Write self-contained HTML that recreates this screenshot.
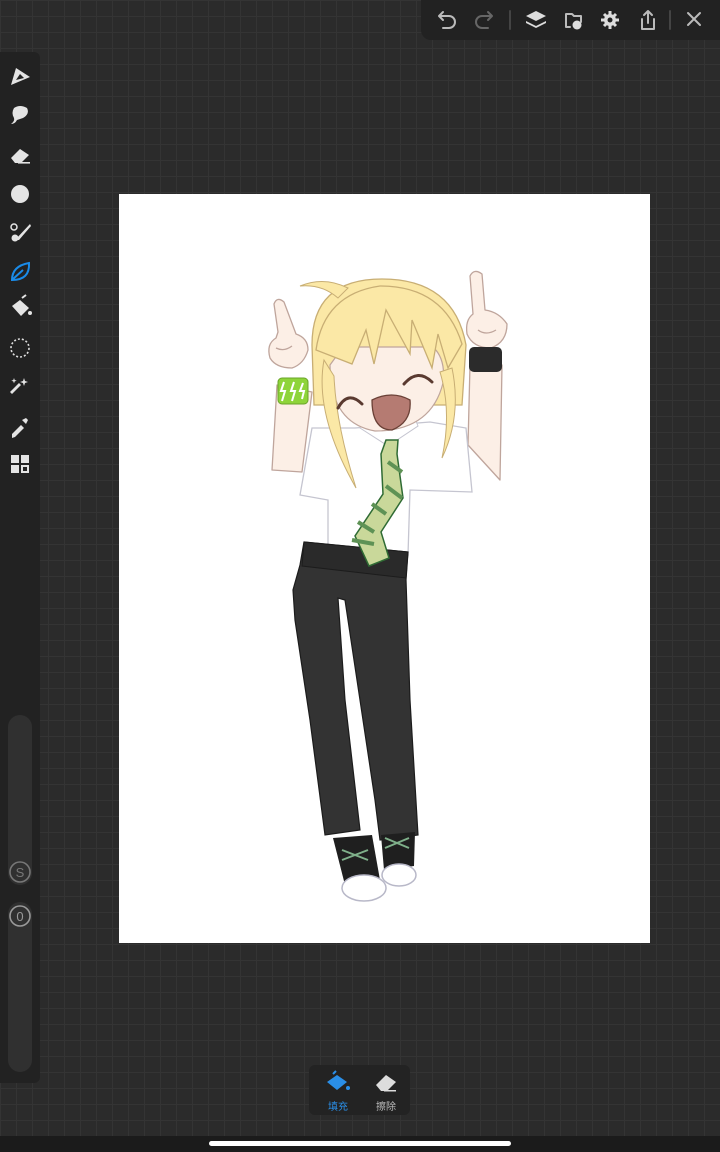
<!DOCTYPE html>
<html><head><meta charset="utf-8">
<style>
html,body{margin:0;padding:0;}
body{width:720px;height:1152px;position:relative;overflow:hidden;background-color:#2b2b2b;
background-image:linear-gradient(#343434 1px,transparent 1px),linear-gradient(90deg,#343434 1px,transparent 1px);
background-size:16px 16px;font-family:"Liberation Sans","Noto Sans CJK SC",sans-serif;}
.top{position:absolute;left:421px;top:0;width:299px;height:40px;background:#222;border-bottom-left-radius:10px;}
.left{position:absolute;left:0;top:52px;width:40px;height:1031px;background:#222;border-top-right-radius:6px;border-bottom-right-radius:6px;}
.slider{position:absolute;left:8px;width:24px;background:#303030;border-radius:12px;}
.canvas{position:absolute;left:119px;top:194px;width:531px;height:749px;background:#fff;}
.pill{position:absolute;left:309px;top:1065px;width:101px;height:50px;background:#232323;border-radius:6px;}
.pill span{position:absolute;top:33px;font-size:10px;}
.bottom{position:absolute;left:0;top:1136px;width:720px;height:16px;background:#1b1b1b;}
.home{position:absolute;left:209px;top:1141px;width:302px;height:5px;border-radius:3px;background:#fff;}
svg{position:absolute;left:0;top:0;}
</style></head><body>
<div class="top"></div>
<div class="left">
 <div class="slider" style="top:663px;height:170px;"></div>
 <div class="slider" style="top:850px;height:170px;"></div>
</div>
<div class="canvas"></div>
<div class="pill"><span style="left:19px;color:#2a8fe8">填充</span><span style="left:67px;color:#bbb">擦除</span></div>
<div class="bottom"></div><div class="home"></div>

<svg width="720" height="1152" viewBox="0 0 720 1152">
<g fill="none" stroke="#bbb" stroke-width="2" stroke-linecap="round" stroke-linejoin="round">
 <path d="M440 16 h9 a6 6 0 0 1 0 12 h-6 M443 12 l-4 4 4 4"/>
 <path d="M491 16 h-9 a6 6 0 0 0 0 12 h6 M488 12 l4 4 -4 4" stroke="#666"/>
 <line x1="510" y1="11" x2="510" y2="29" stroke="#444"/>
 <line x1="670" y1="11" x2="670" y2="29" stroke="#444"/>
 <path d="M688 13 l12 12 M700 13 l-12 12"/>
 <path d="M642 19 v10 h12 v-10 M648 23 v-12 M644 15 l4 -4 4 4"/>
 <path d="M566 14 h6 l2 2 h7 v6 M566 14 v13 h4"/>
</g>
<g fill="#ddd">
 <path d="M536 11 l10 5 -10 5 -10 -5z"/>
 <path d="M526 21 l10 5 10 -5 0 2 -10 5 -10 -5z"/>
 <circle cx="577" cy="25" r="4.5"/>
 <circle cx="610" cy="20" r="6"/>
 <g stroke="#ddd" stroke-width="3"><path d="M610 11 v18 M601 20 h18 M604 14 l12 12 M616 14 l-12 12"/></g>
 <circle cx="610" cy="20" r="2.5" fill="#222"/>
</g>
<g fill="#e4e4e4">
 <path d="M11 85 L16 68 L30 77 Z"/><path d="M16 80 l4-6 4 4z" fill="#222"/>
 <path d="M14 108 q6-4 13 0 q3 6-4 10 l-6 2 q-2 4-6 4 q4-3 3-6 q-3-5 0-10z"/>
 <path d="M11 158 l9-9 9 6 -8 8 h-6z"/><rect x="18" y="162" width="12" height="1.6"/>
 <circle cx="20" cy="194" r="9"/>
 <path d="M15 240 l15-16 1 2 -12 14z"/><circle cx="15" cy="238" r="3.5"/>
 <circle cx="14" cy="227" r="3" fill="none" stroke="#e4e4e4" stroke-width="1.5"/>
 <path d="M12 306 l8-6 9 8 -8 8z"/><path d="M22 298 l4 -3" stroke="#e4e4e4" stroke-width="2"/><circle cx="30" cy="313" r="2"/>
 <path d="M19 383 l2 2 -9 9 -2 -2z"/><path d="M24 378 l1 3 3 1 -3 1 -1 3 -1 -3 -3 -1 3 -1z"/><path d="M14 378 l0.7 2 2 .7 -2 .7 -.7 2 -.7 -2 -2 -.7 2 -.7z"/>
 <path d="M12 434 l9-9 3 3 -9 9 -3 1z"/><path d="M22 420 l4-2 2 2 -2 4z"/>
 <rect x="11" y="455" width="8" height="8"/><rect x="21" y="455" width="8" height="8"/><rect x="11" y="465" width="8" height="8"/><rect x="21" y="465" width="8" height="8"/><rect x="23" y="467" width="4" height="4" fill="#222"/>
</g>
<circle cx="20" cy="348" r="9" fill="none" stroke="#ddd" stroke-width="1.6" stroke-dasharray="2 2"/>
<path d="M12 280 q0-14 17-17 q1 17-17 17z M13 279 l10-9" fill="none" stroke="#1a8be8" stroke-width="2"/>
<g fill="none" stroke="#777" stroke-width="1.6"><circle cx="20" cy="872" r="10"/><circle cx="20" cy="916" r="10" stroke="#999"/></g>
<text x="20" y="877" font-size="13" fill="#777" text-anchor="middle" font-family="Liberation Sans">S</text>
<text x="20" y="921" font-size="13" fill="#999" text-anchor="middle" font-family="Liberation Sans">0</text>
<path d="M327 1082 l10-7 10 7 -10 8z" fill="#2a8fe8"/><path d="M333 1074 l3-3" stroke="#2a8fe8" stroke-width="2"/><circle cx="348" cy="1088" r="2" fill="#2a8fe8"/>
<path d="M376 1085 l10-10 10 7 -9 9 h-6z" fill="#ddd"/><rect x="384" y="1090" width="12" height="1.5" fill="#ddd"/>

<!-- character -->
<g stroke="#bfa59c" stroke-width="1.3" stroke-linejoin="round">
 <path d="M277 385 L272 470 L302 472 L312 392 Z" fill="#fcefe6"/>
 <path d="M470 365 L468 445 L500 480 L502 365 Z" fill="#fcefe6"/>
 <path d="M274 304 q3-8 10-2 l12 32 q12 4 12 16 q-4 14-16 18 q-16 0-22-10 q-4-14 6-20 l2-6 z" fill="#fcefe6"/>
 <path d="M470 276 q4-8 12-2 l3 36 q14 2 22 14 q0 18-16 24 q-18 0-24-14 q-2-14 6-20z" fill="#fcefe6"/>
 <path d="M276 348 q8 4 16-2 M478 330 q8 6 18 0" fill="none"/>
</g>
<rect x="278" y="378" width="30" height="26" rx="4" fill="#8ed43a" stroke="#6aa428"/>
<path d="M284 382 l-3 9 h4 l-3 10 M294 382 l-3 9 h4 l-3 10 M303 383 l-3 8 h4 l-2 8" stroke="#fff" stroke-width="2" fill="none"/>
<rect x="469" y="347" width="33" height="25" rx="5" fill="#2b2b2b"/>
<path d="M312 428 L300 495 L328 500 L328 548 L408 555 L410 490 L472 492 L466 428 L430 422 L355 428 Z" fill="#fff" stroke="#c5c5d0" stroke-width="1.3"/>
<path d="M360 428 l28 18 l30 -20 l-4 -10 l-26 14 l-24 -12z" fill="#fff" stroke="#c5c5d0"/>
<path d="M304 542 L408 552 L406 580 L410 700 L418 835 L380 840 L375 800 L345 600 L338 598 L345 700 L360 830 L325 835 L310 720 L295 620 L293 590 L300 565 Z" fill="#333" stroke="#1c1c1c" stroke-width="1.2"/>
<path d="M304 542 L408 552 L406 578 L302 566 Z" fill="#2a2a2a" stroke="#1c1c1c"/>
<path d="M333 838 L372 835 L380 880 L345 885 Z" fill="#1f1f1f"/>
<path d="M381 835 L415 832 L414 866 L384 870 Z" fill="#1f1f1f"/>
<ellipse cx="364" cy="888" rx="22" ry="13" fill="#fff" stroke="#b8b8c8" stroke-width="1.5"/>
<ellipse cx="399" cy="875" rx="17" ry="11" fill="#fff" stroke="#b8b8c8" stroke-width="1.5"/>
<path d="M342 850 l26 10 M342 860 l26-10 M385 838 l24 10 M385 848 l24-10" stroke="#7fb08a" stroke-width="2" fill="none"/>
<!-- tie -->
<path d="M386 440 l12 0 l-1 14 l6 44 l-22 34 l8 26 l-20 8 l-14 -30 l28 -42 l-2 -40z" fill="#c9d89a" stroke="#2f6b34" stroke-width="1.5"/>
<path d="M388 462 l14 10 M386 486 l16 12 M372 504 l14 10 M358 522 l16 10 M352 540 l22 4" stroke="#5e9255" stroke-width="4" fill="none"/>
<!-- hair back -->
<path d="M312 345 q0-66 70-66 q72 0 84 66 l-4 60 l-148 0 z" fill="#fbe8a6" stroke="#c8ae74" stroke-width="1.3"/>
<path d="M330 365 q0 58 45 66 q56 0 68-48 q3-24-10-36 l-90 0 z" fill="#fcefe6" stroke="#bfa59c" stroke-width="1.2"/>
<path d="M316 350 q8-56 64-64 q64 0 82 58 l-14 24 l-10 -34 l-6 34 l-20 -48 l-2 34 l-24 -44 l-12 54 l-8 -34 l-14 34 z" fill="#fbe8a6" stroke="#c8ae74" stroke-width="1.3"/>
<path d="M324 360 q-10 54 32 128 q-20-64-22-112z" fill="#fbe8a6" stroke="#c8ae74"/>
<path d="M440 372 q12 40 2 86 q20-42 10-90z" fill="#fbe8a6" stroke="#c8ae74"/>
<path d="M348 288 q-24-12 -48-2 q22 -2 38 12z" fill="#fbe8a6" stroke="#c8ae74"/>
<path d="M338 408 q10-18 24-4 M404 384 q14-16 28-2" stroke="#5a3a30" stroke-width="3" fill="none" stroke-linecap="round"/>
<path d="M372 400 q20-10 38 0 q2 22-18 30 q-20 0-20-30z" fill="#b57b72" stroke="#6a4036" stroke-width="1.3"/>
</svg>
</body></html>
